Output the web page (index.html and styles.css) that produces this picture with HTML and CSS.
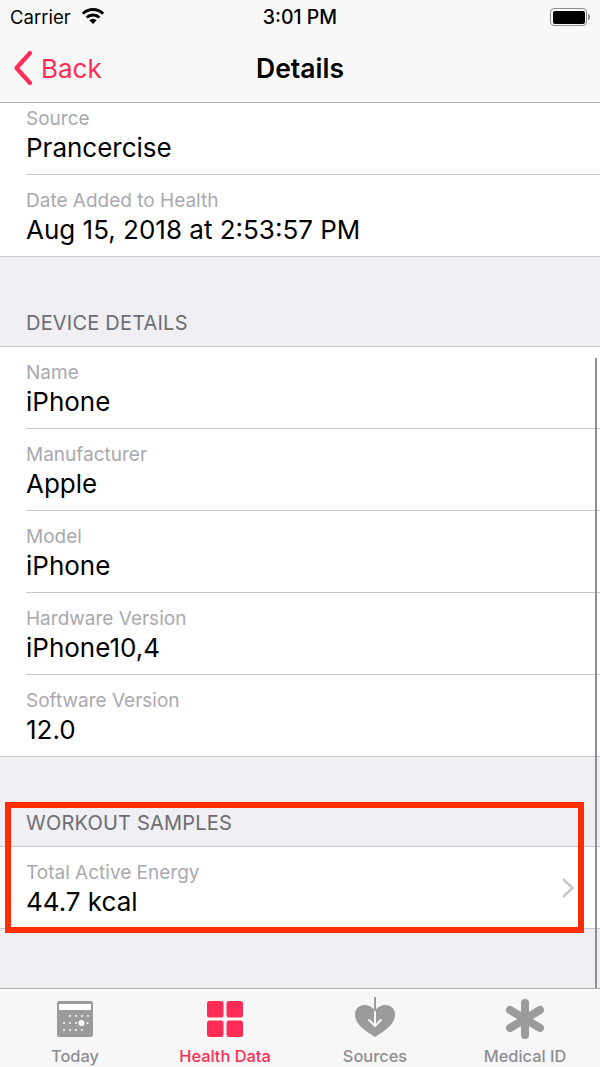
FILE: index.html
```html
<!DOCTYPE html>
<html lang="en">
<head>
<meta charset="utf-8">
<title>Details</title>
<link rel="stylesheet" href="styles.css">
</head>
<body>
<div class="screen">
  <header class="topbar">
    <div class="status">
      <div class="status-left">
        <span class="carrier">Carrier</span>
        <svg class="wifi" viewBox="0 0 22 16" width="24" height="17"><path d="M0.500 5.300a15 15 0 0 1 21 0l-1.900 2a12.200 12.200 0 0 0-17.200 0zM4 8.900a10 10 0 0 1 14 0l-2 2a7.200 7.200 0 0 0-10 0zM7.500 12.400a5 5 0 0 1 7 0L11 16z" fill="#000"/></svg>
      </div>
      <span class="clock">3:01 PM</span>
      <div class="battery"><span class="battery-fill"></span></div>
    </div>
    <nav class="navbar">
      <a class="back">
        <svg viewBox="0 0 20 36" width="20" height="36"><path d="M17 3 3.500 18 17 33" fill="none" stroke="#ff2d55" stroke-width="4.200" stroke-linecap="round" stroke-linejoin="round"/></svg>
        <span>Back</span>
      </a>
      <h1 class="title">Details</h1>
    </nav>
  </header>

  <main class="content">
    <section class="group">
      <div class="row row-first"><div class="label">Source</div><div class="value">Prancercise</div></div>
      <div class="row row-last"><div class="label">Date Added to Health</div><div class="value">Aug 15, 2018 at 2:53:57 PM</div></div>
    </section>
    <h2 class="section-title">DEVICE DETAILS</h2>
    <section class="group bordered">
      <div class="row"><div class="label">Name</div><div class="value">iPhone</div></div>
      <div class="row"><div class="label">Manufacturer</div><div class="value">Apple</div></div>
      <div class="row"><div class="label">Model</div><div class="value">iPhone</div></div>
      <div class="row"><div class="label">Hardware Version</div><div class="value">iPhone10,4</div></div>
      <div class="row row-last"><div class="label">Software Version</div><div class="value">12.0</div></div>
    </section>
    <h2 class="section-title">WORKOUT SAMPLES</h2>
    <section class="group bordered">
      <div class="row row-last row-link">
        <div><div class="label">Total Active Energy</div><div class="value">44.7 kcal</div></div>
        <svg class="chevron" viewBox="0 0 14 22" width="14" height="22"><path d="M2 2l9.500 9L2 20" fill="none" stroke="#c7c7cc" stroke-width="2.600"/></svg>
      </div>
    </section>
  </main>

  <footer class="tabbar">
    <div class="tab">
      <svg class="tab-icon" viewBox="-3 -4 42 42" width="42" height="42">
        <rect x="0" y="0" width="36" height="36" rx="2.500" fill="#9b9b9b"/>
        <rect x="2" y="3" width="32" height="6" fill="#fff"/>
        <g fill="#fff"><circle cx="13" cy="15" r="1"/><circle cx="19" cy="15" r="1"/><circle cx="25" cy="15" r="1"/><circle cx="31" cy="15" r="1"/><circle cx="7" cy="22" r="1"/><circle cx="13" cy="22" r="1"/><circle cx="19" cy="22" r="1"/><circle cx="24.500" cy="22" r="3"/><circle cx="30.500" cy="22" r="1"/><circle cx="7" cy="29" r="1"/><circle cx="13" cy="29" r="1"/><circle cx="19" cy="29" r="1"/><circle cx="25" cy="29" r="1"/></g>
      </svg>
      <span>Today</span>
    </div>
    <div class="tab tab-active">
      <svg class="tab-icon" viewBox="-3 -4 42 42" width="42" height="42" fill="#ff2d55">
        <rect width="16.500" height="16.500" rx="2.500"/><rect x="19.500" width="16.500" height="16.500" rx="2.500"/><rect y="19.500" width="16.500" height="16.500" rx="2.500"/><rect x="19.500" y="19.500" width="16.500" height="16.500" rx="2.500"/>
      </svg>
      <span>Health Data</span>
    </div>
    <div class="tab">
      <svg class="tab-icon" viewBox="0 0 42 42" width="42" height="42">
        <path d="M21 40C12 34 1 28 1 17.500 1 11.500 5.500 8 10.500 8c4.500 0 8.500 2.500 10.500 6 2-3.500 6-6 10.500-6C36.500 8 41 11.500 41 17.500 41 28 30 34 21 40z" fill="#9b9b9b"/>
        <path d="M21 0v14" fill="none" stroke="#9b9b9b" stroke-width="2"/>
        <path d="M21 14v15M14.500 22.500l6.500 6.500 6.500-6.500" fill="none" stroke="#f7f7f8" stroke-width="2"/>
      </svg>
      <span>Sources</span>
    </div>
    <div class="tab">
      <svg class="tab-icon" viewBox="0 -1 40 42" width="40" height="42">
        <g stroke="#9b9b9b" stroke-width="8" stroke-linecap="round"><path d="M20 5v32"/><path d="M5 12l30 18"/><path d="M35 12 5 30"/></g>
      </svg>
      <span>Medical ID</span>
    </div>
  </footer>

  <div class="scrollbar"></div>
  <div class="highlight"></div>
</div>
</body>
</html>
```

FILE: styles.css
```css
* { box-sizing: border-box; }
html, body { margin: 0; padding: 0; }
body { font-family: Inter, "Liberation Sans", sans-serif; background: #efeff4; color: #000; }
.screen { position: relative; width: 600px; height: 1067px; overflow: hidden; display: flex; flex-direction: column; background: #efeff4; }

.topbar { height: 103px; flex: none; background: #f8f8f8; border-bottom: 1px solid #b2b2b2; }
.status { position: relative; height: 34px; display: flex; align-items: center; justify-content: space-between; padding: 0 10px; }
.status-left { display: flex; align-items: center; gap: 10px; }
.carrier { font-size: 18.500px; }
.wifi { margin-top: -3px; }
.clock { position: absolute; left: 0; right: 0; text-align: center; font-size: 19.500px; font-weight: 500; }
.battery { width: 37px; height: 18px; margin-right: 3px; border: 1.500px solid #8e8e8e; border-radius: 4px; padding: 1.500px; position: relative; }
.battery::after { content: ""; position: absolute; right: -4px; top: 4.500px; width: 2px; height: 6px; background: #8e8e8e; border-radius: 0 2px 2px 0; }
.battery-fill { display: block; height: 100%; background: #000; border-radius: 2px; }

.navbar { position: relative; height: 68px; display: flex; align-items: center; padding: 0 0 0 13px; }
.back { display: flex; align-items: center; gap: 8px; color: #ff2d55; font-size: 26px; }
.title { position: absolute; left: 0; right: 0; margin: 0; text-align: center; font-size: 26.500px; font-weight: 600; }

.content { flex: 1; min-height: 0; }
.group { background: #fff; border-bottom: 1px solid #c8c7cc; }
.bordered { border-top: 1px solid #c8c7cc; }
.row { height: 82px; margin-left: 26px; padding-top: 14px; border-bottom: 1px solid #c8c7cc; }
.row-first { height: 72px; padding-top: 4px; }
.row-last { border-bottom: 0; height: 81px; }
.row-link { display: flex; justify-content: space-between; padding-right: 25px; }
.chevron { align-self: center; margin-top: -14px; }
.label { font-size: 19px; line-height: 23px; color: #a9a9ae; }
.value { font-size: 26px; line-height: 34px; margin-top: 1px; }
.section-title { height: 89px; margin: 0; padding: 0 0 11px 26px; display: flex; align-items: flex-end; font-size: 20px; line-height: 23px; font-weight: 400; letter-spacing: 0.200px; color: #6d6d72; }

.tabbar { height: 79px; flex: none; display: grid; grid-template-columns: repeat(4, 150px); background: #f7f7f8; border-top: 1px solid #b2b2b2; }
.tab { display: flex; flex-direction: column; align-items: center; padding-top: 8px; font-size: 16.400px; line-height: 20px; font-weight: 500; color: #8e8e93; }
.tab-icon { margin-bottom: 7px; }
.tab-active { color: #ff2d55; }

.scrollbar { position: absolute; left: 595px; top: 358px; width: 1.500px; height: 630px; background: #8e8e93; }
.highlight { position: absolute; left: 5px; top: 802px; width: 579px; height: 131px; border: 6px solid #ff2d00; }
```
